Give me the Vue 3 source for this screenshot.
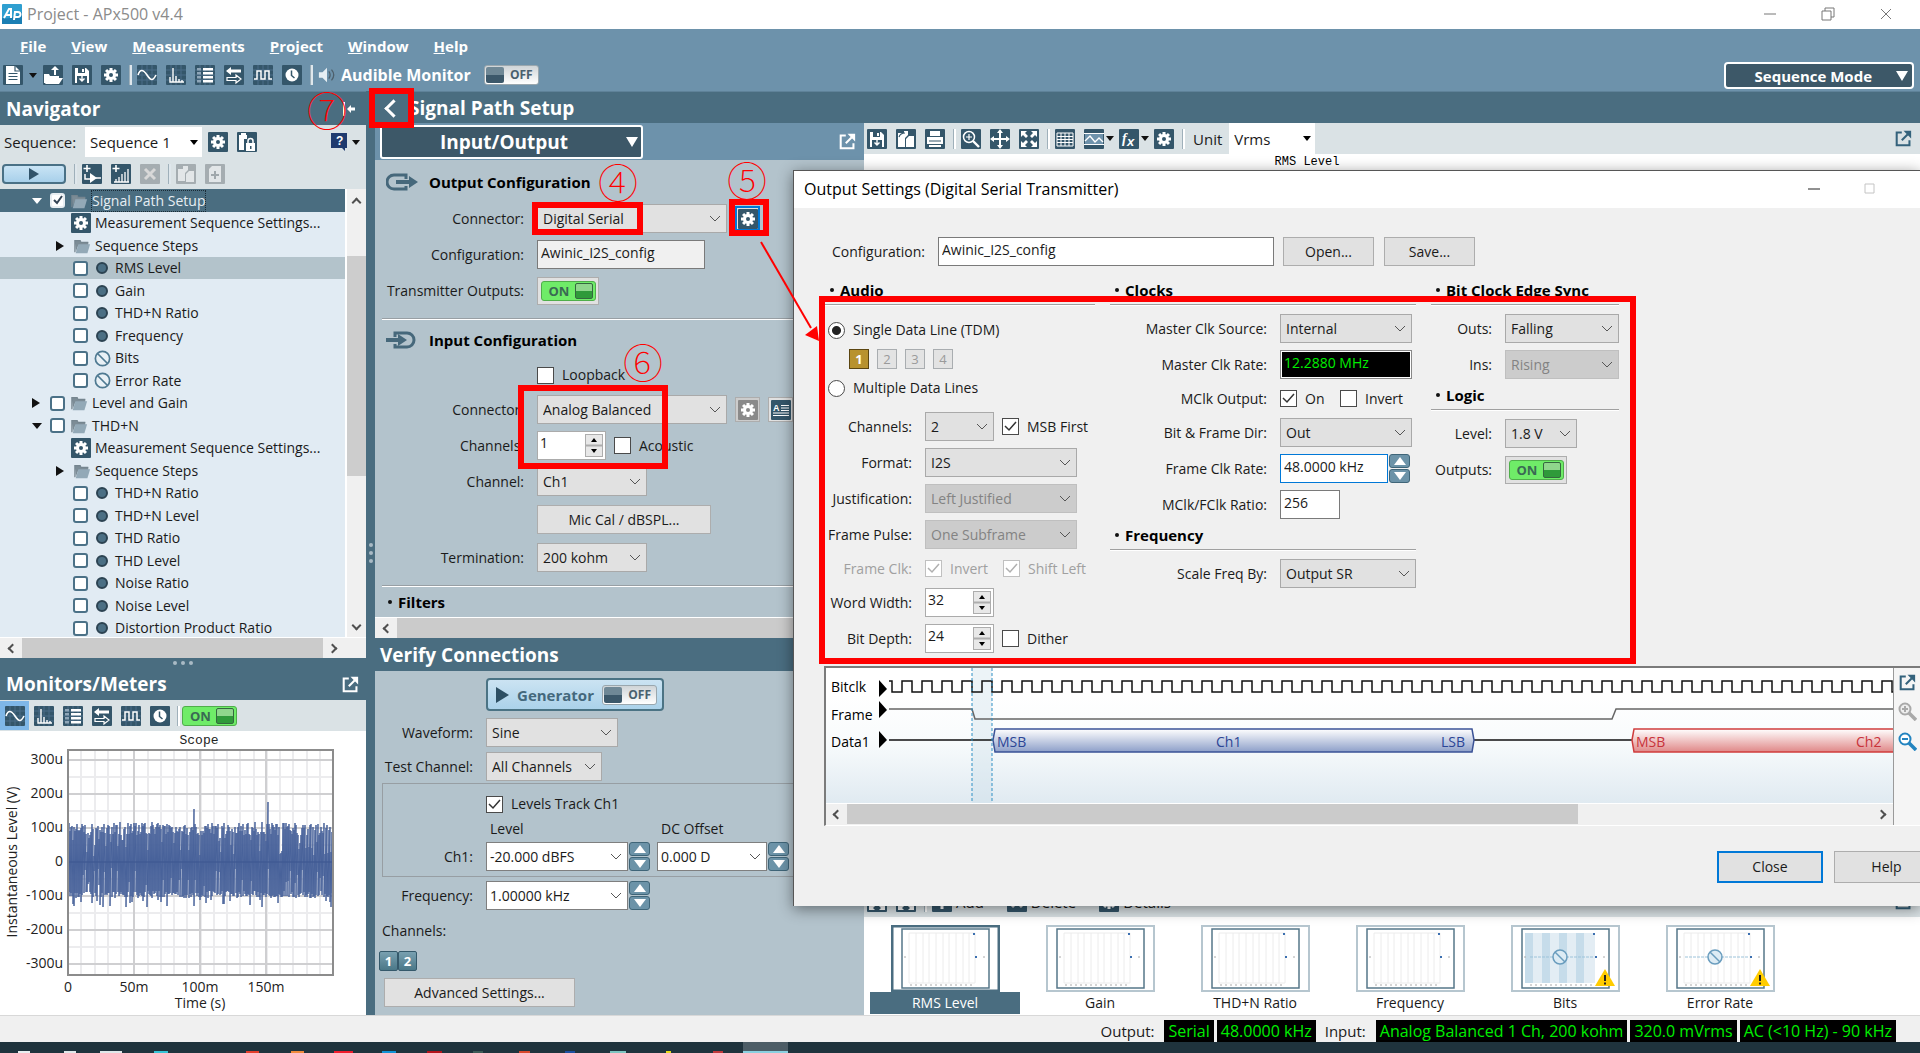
<script setup>
import { h } from 'vue'

const gear = '<g fill="#fff"><circle cx="10" cy="10" r="5"/><rect x="8.500" y="3" width="3" height="14"/><rect x="3" y="8.500" width="14" height="3"/><rect x="8.500" y="3" width="3" height="14" transform="rotate(45 10 10)"/><rect x="8.500" y="3" width="3" height="14" transform="rotate(-45 10 10)"/></g><circle cx="10" cy="10" r="2" fill="#34566a"/>'
const s = (d, w = 1.6, c = '#fff') => `<path d="${d}" fill="none" stroke="${c}" stroke-width="${w}"/>`
const f = (d, c = '#fff') => `<path d="${d}" fill="${c}"/>`
const mesh = s('M0 5H20M0 10H20M0 15H20M5 0V20M10 0V20M15 0V20', 1, '#4a6c88')

const icons = {
  gear,
  gearDim: gear.replace('#34566a', '#8a8a8a'),
  doc: f('M3 1h9l5 5v13H3z') + s('M12 1v5h5M5.500 8.500h9M5.500 11.500h9M5.500 14.500h9', 1.2, '#34566a'),
  open: f('M1 9h5l1 2h9v2H6l-3 5H1zM6 13h14l-4 6H2z') + s('M12 10V4', 2) + f('M8 5l4-4 4 4z'),
  save: f('M3 3h11l3 3v12H3z') + f('M6 3h7v5H6zM5 11h10v7H5z', '#34566a') + s('M10 10v6M7.500 13.500l2.500 2.500 2.500-2.500', 1.4) + f('M10 4h2v3h-2z'),
  sine: mesh + s('M1 10C3 4 6 4 10 10S16 16 19 10', 1.6),
  fft: mesh + s('M4 17V12V17H7V3V17H10V11V17H13V14V17H16V15V17H18', 1.4),
  list: mesh + f('M8 3h10v2.500H8zM8 7h10v2.500H8zM8 11h10v2.500H8zM8 15h10v2.500H8z') + f('M2 3h4v2.500H2zM2 7h4v2.500H2zM2 11h4v2.500H2zM2 15h4v2.500H2z', '#8fa6b8'),
  swap: f('M2 6l5-4v2.500h10v3H7V10z') + s('M3 12.500h9v-2.500l5 4-5 4v-2.500H3z', 1.2),
  digital: mesh + s('M1 14h3V6h4v8h4V6h4v8h3', 1.5),
  clock: '<circle cx="10" cy="10" r="6.500" fill="#fff"/>' + s('M9.500 5.500V10.500l3 2.500', 1.5, '#34566a'),
  lock: f('M2 3h8v4H7v11H2z') + f('M9 11h9v8H9z') + s('M11 11V9a2.500 2.500 0 0 1 5 0v2', 1.5) + f('M13 14h1.500v3H13z', '#34566a') + f('M4 1h5v2H4z'),
  addStep: s('M5 1v7M1.500 4.500h7', 1.6) + s('M3 10v5h5M14 14h5', 1.5) + f('M8 9l7 5-7 5z'),
  addChart: s('M5 1v7M1.500 4.500h7', 1.6) + s('M3 18h15M5 18v-3M8 18v-5M11 18v-8M14 18V8M17 18V5', 1.3),
  del: s('M5 5l10 10M15 5L5 15', 3, '#d8d8d8'),
  copyDim: f('M2 5h5V2h5v4L9 9v8H2z', '#e2e6e8') + f('M10 10l3-3h5v11h-8z', '#e2e6e8'),
  addDim: f('M4 5l3-3h9v16H4z', '#e2e6e8') + s('M10 7v8M6 11h8', 2, '#a0a8ac'),
  copy: f('M2 4h6V2h4v4l-3 3v9H2z') + f('M10 10l3-3h5v11h-8z') + s('M3 8c1-3 3-4 6-4', 1.2, '#34566a'),
  print: f('M5 2h10v5H5zM2 8h16v7H2z') + s('M4 12h12', 1.2, '#34566a') + f('M4 13h12v5H4z') + s('M2 15.500h16', 1, '#34566a'),
  zoomIn: '<circle cx="8" cy="8" r="5.500" fill="none" stroke="#fff" stroke-width="1.500"/>' + s('M8 5v6M5 8h6', 1.2) + s('M12 12l6 6', 2.4),
  move: s('M10 3v14M3 10h14', 2) + f('M10 0l3 4H7zM10 20l3-4H7zM0 10l4-3v6zM20 10l-4-3v6z'),
  expand: f('M2 2h6L6 4l3 3-2 2-3-3-2 2zM18 2v6l-2-2-3 3-2-2 3-3-2-2zM2 18v-6l2 2 3-3 2 2-3 3 2 2zM18 18h-6l2-2-3-3 2-2 3 3 2-2z'),
  table: s('M2 4h16v13H2zM2 7.500h16M2 10.500h16M2 13.500h16M6 4v13M10 4v13M14 4v13', 1),
  graph: f('M1 5h18v10H1z', '#6f93ac') + s('M0 4.500h20M0 15.500h20', 1) + s('M1 12l5-5 5 6 4-4 4 4', 1.4),
  fx: '<text x="3" y="14" font-family="Liberation Serif, serif" font-style="italic" font-weight="bold" font-size="14" fill="#fff">f</text><text x="8" y="17" font-family="Liberation Sans, sans-serif" font-style="italic" font-weight="bold" font-size="13" fill="#fff">x</text>',
  help: f('M2 1h16v15h-2v3l-3-3H2z', '#1f3a6e') + '<text x="7" y="13" font-family="Liberation Sans, sans-serif" font-weight="bold" font-size="12" fill="#fff">?</text>',
  abc: f('M1 3h18v14H1z', '#34566a') + '<text x="2" y="11" font-family="Liberation Sans, sans-serif" font-weight="bold" font-size="9" fill="#fff">A</text>' + s('M10 5.500h8M10 8h8M10 10.500h8M2 13h16M2 15.500h16', 1),
  ext: s('M8 3H2v15h15v-6', 2.4, 'currentColor') + s('M8 12L15 5', 2.4, 'currentColor') + f('M10 1h9v9z', 'currentColor'),
  plus: s('M10 3v14M3 10h14', 3),
  mag: '<circle cx="8" cy="8" r="5.500" fill="#fff" stroke="currentColor" stroke-width="2"/>' + s('M5 8h6', 2, 'currentColor') + s('M12 12l7 7', 3.5, 'currentColor'),
  magPlus: '<circle cx="8" cy="8" r="5.500" fill="#eee" stroke="currentColor" stroke-width="2"/>' + s('M5 8h6M8 5v6', 2, 'currentColor') + s('M12 12l7 7', 3.5, 'currentColor'),
  folder: f('M2 4h6l1 2h8v3H6L3 17z', '#7c8c96') + f('M6 8h13l-3 10H3z', '#93a9b7') + s('M2 17V4h6l1 2h8', 1.2, '#75858f'),
  ban: '<circle cx="10" cy="10" r="7.500" fill="#e9f1f6" stroke="currentColor" stroke-width="1.800"/>' + s('M5 5l10 10', 1.8, 'currentColor'),
  speaker: f('M1 7h4l5-5v16l-5-5H1z', '#e6eef3') + s('M12 6q3 4 0 8M15 4q5 6 0 12', 1.4, '#4d5f6b')
}

const Ic = (p) => h('svg', { viewBox: '0 0 20 20', 'aria-hidden': 'true', innerHTML: icons[p.name] })
Ic.props = ['name']
const Dd = (p) => h('select', null, [h('option', p.opt)])
Dd.props = ['opt']

const menus = ['File', 'View', 'Measurements', 'Project', 'Window', 'Help']
const meters = ['sine', 'fft', 'list', 'swap', 'digital', 'clock']

const leaf = (t, icon = 'dot') => ({ t, kind: 'leaf', icon })
const tree = [
  { t: 'Signal Path Setup', kind: 'branch', open: true, on: true, sel: true },
  { t: 'Measurement Sequence Settings...', kind: 'setup' },
  { t: 'Sequence Steps', kind: 'steps' },
  { ...leaf('RMS Level'), hot: true },
  leaf('Gain'), leaf('THD+N Ratio'), leaf('Frequency'), leaf('Bits', 'ban'), leaf('Error Rate', 'ban'),
  { t: 'Level and Gain', kind: 'branch', open: false },
  { t: 'THD+N', kind: 'branch', open: true },
  { t: 'Measurement Sequence Settings...', kind: 'setup' },
  { t: 'Sequence Steps', kind: 'steps' },
  leaf('THD+N Ratio'), leaf('THD+N Level'), leaf('THD Ratio'), leaf('THD Level'),
  leaf('Noise Ratio'), leaf('Noise Level'), leaf('Distortion Product Ratio')
]

/* scope trace: one vertical excursion per pixel column */
let seed = 7
const rnd = () => (seed = (seed * 16807) % 2147483647) / 2147483647
let trace = 'M68 131'
for (let x = 69; x < 333; x++) {
  const spike = x === 194 ? 20 : x === 268 ? 24 : 0
  const gap = rnd() > 0.86
  const up = gap && !spike ? 6 + rnd() * 20 : 27 + rnd() * 13 + spike
  const dn = rnd() > 0.86 ? 6 + rnd() * 18 : 29 + rnd() * 7 + (rnd() > 0.86 ? 9 : 0)
  trace += `L${x} ${Math.round(131 - up)}L${x} ${Math.round(131 + dn)}`
}
const yTicks = ['300u', '200u', '100u', '0', '-100u', '-200u', '-300u'].map((t, i) => ({ t, y: 29 + i * 34 }))
const xTicks = ['0', '50m', '100m', '150m'].map((t, i) => ({ t, x: 68 + i * 66 }))

let clk = 'M63 13H66'
for (let x = 66; x < 1080; x += 20) clk += `V24H${x + 10}V13H${x + 20}`

const thumbs = [
  { t: 'RMS Level', sel: true }, { t: 'Gain' }, { t: 'THD+N Ratio' }, { t: 'Frequency' },
  { t: 'Bits', bars: true, warn: true }, { t: 'Error Rate', warn: true }
]
const apps = [
  ['#e8eef0', 18, 12], ['#dfe7e9', 34, 12], ['#dfe7e9', 24, 22], ['#35c3d6', 32, 14], ['#e33e2b', 78, 13], ['#f08a3c', 32, 13], ['#f01c2c', 30, 19],
  ['#1292d6', 29, 14], ['#b3131b', 31, 15], ['#3d5b57', 31, 10], ['#d9472b', 36, 11], ['#1d4fa0', 35, 10], ['#7dc4c0', 35, 16], ['#e8dc1c', 40, 5], ['#c0393b', 42, 10]
]
</script>

<template>
  <div class="app">
    <header class="title">
      <svg class="logo" viewBox="0 0 20 20" aria-hidden="true"><rect width="20" height="20" rx="1" fill="#2f9fd0" /><path d="M0 14Q10 16 20 8V20H0z" fill="#1b7fb4" /><path d="M2 14L7 5h2v9M4 11h5M12 16l1-8h3a2 2 0 0 1 0 5h-3" fill="none" stroke="#fff" stroke-width="2" /></svg>
      <span>Project - APx500 v4.4</span>
      <svg class="winctl" viewBox="0 0 130 20" aria-hidden="true"><path d="M4 10H16M62 7h9v9h-9zM65 7V4h9v9h-3M121 5l10 10M131 5l-10 10" /></svg>
    </header>

    <div class="top">
      <div class="bars">
        <nav class="menu">
          <a v-for="m in menus" :key="m" href="#"><u>{{ m[0] }}</u>{{ m.slice(1) }}</a>
        </nav>
        <div class="tools">
          <Ic name="doc" class="ic" /><i class="tri mx" /><Ic name="open" class="ic" /><Ic name="save" class="ic" /><Ic name="gear" class="ic" />
          <i class="sep" />
          <Ic v-for="m in meters" :key="m" :name="m" class="ic" />
          <i class="sep" />
          <Ic name="speaker" class="spk" /><b class="aud">Audible Monitor</b>
          <button class="tog off"><i />OFF</button>
        </div>
      </div>
      <button class="mode">Sequence Mode<i class="tri w" /></button>
    </div>

    <main class="main">
      <section class="nav">
        <h2 class="hd navhd">Navigator<svg viewBox="0 0 14 14" class="pin" aria-hidden="true"><path d="M1 0v14" stroke="#fff" stroke-width="2" /><path d="M4 7l4-4v2.500h4v3H8V11z" fill="#fff" /></svg></h2>
        <div class="seq">
          <div class="seqrow">
            <label for="seq">Sequence:</label>
            <Dd id="seq" opt="Sequence 1" class="flat" />
            <Ic name="gear" class="ic" /><Ic name="lock" class="ic" />
            <span class="grow" /><Ic name="help" class="hlp" /><i class="tri" />
          </div>
          <div class="seqrow r2">
            <button class="play" aria-label="Run"><i /></button>
            <i class="sep" /><Ic name="addStep" class="ic" /><Ic name="addChart" class="ic" /><Ic name="del" class="ic dim" />
            <i class="sep" /><Ic name="copyDim" class="ic dim" /><Ic name="addDim" class="ic dim" />
          </div>
        </div>
        <div class="treebox">
          <div class="treeclip">
            <ul class="tree">
              <li v-for="(n, i) in tree" :key="i" :class="[n.kind, { sel: n.sel, hot: n.hot }]">
                <i v-if="n.kind === 'branch' || n.kind === 'steps'" class="exp" :class="{ open: n.open }" />
                <input v-if="n.kind === 'branch' || n.kind === 'leaf'" type="checkbox" class="tc" :checked="n.on" :aria-label="n.t">
                <Ic v-if="n.kind === 'branch' || n.kind === 'steps'" name="folder" class="fo" />
                <Ic v-if="n.kind === 'setup'" name="gear" class="ic" />
                <i v-if="n.icon === 'dot'" class="dot" />
                <Ic v-if="n.icon === 'ban'" name="ban" class="ban" />
                <span>{{ n.t }}</span>
              </li>
            </ul>
          </div>
          <div class="vbar"><i class="chev u" /><i class="vthumb" /><i class="chev d" /></div>
        </div>
        <div class="hbar"><i class="chev l" /><i class="hthumb nt" /><i class="chev r" /></div>
        <div class="grip"><i /><i /><i /></div>
        <h2 class="hd mon">Monitors/Meters<Ic name="ext" class="ext" /></h2>
        <div class="mtools">
          <span v-for="(m, i) in meters" :key="m" class="mt" :class="{ cur: i === 0 }"><Ic :name="m" class="ic" /></span>
          <i class="sep" /><button class="tog on">ON<i /></button>
        </div>
        <svg class="scope" viewBox="0 0 366 283" role="img" aria-label="Scope">
          <text x="199" y="13" class="mono">Scope</text>
          <g stroke="#ececee" stroke-width="2"><path v-for="k in 19" :key="k" :d="`M${68 + Math.round(k * 13.25)} 19V244`" /><path v-for="k in 6" :key="'h' + k" :d="`M69 ${12 + k * 34}H333`" /></g>
          <g stroke="#cfcfd1" stroke-width="2"><path v-for="t in yTicks" :key="t.t" :d="`M69 ${t.y}H333`" /><path v-for="t in xTicks" :key="t.t" :d="`M${t.x} 19V244`" /></g>
          <path :d="trace" fill="none" stroke="#48629a" stroke-width="1" />
          <path d="M68 131H333" stroke="#3d5690" />
          <rect x="68" y="19" width="265" height="225" fill="none" stroke="#8c8c8c" stroke-width="2" />
          <text v-for="t in yTicks" :key="t.t" x="63" :y="t.y + 4" class="end">{{ t.t }}</text>
          <text v-for="t in xTicks" :key="t.t" :x="t.x" y="261" class="mid">{{ t.t }}</text>
          <text x="200" y="277" class="mid">Time (s)</text>
          <text transform="translate(17 131) rotate(-90)" class="mid">Instantaneous Level (V)</text>
        </svg>
      </section>
      <div class="split"><i /><i /><i /></div>

      <section class="work">
        <h2 class="hd wh">Signal Path Setup</h2>
        <div class="cols">
          <div class="path">
            <div class="iobar"><button class="iobtn"><span>Input/Output</span><i class="tri w" /></button><Ic name="ext" class="ext" /></div>
            <div class="io">
              <h3><svg viewBox="0 0 32 18" class="ioi" aria-hidden="true"><path d="M20 6V2H8a6 6 0 0 0 0 14h12v-3" /><path class="fl" d="M10 7h13V3l9 6-9 6v-4H10z" /></svg>Output Configuration</h3>
              <div class="row"><label for="oc">Connector:</label><Dd id="oc" opt="Digital Serial" class="dd w190" /><button class="ib focus" aria-label="Output settings"><Ic name="gear" class="ic" /></button></div>
              <div class="row"><label for="ocf">Configuration:</label><input id="ocf" class="tb w168 ro" value="Awinic_I2S_config"></div>
              <div class="row"><label for="to">Transmitter Outputs:</label><button id="to" class="wrap"><span class="tog on">ON<i /></span></button></div>
              <hr>
              <h3><svg viewBox="0 0 32 18" class="ioi" aria-hidden="true"><path d="M9 6V2h12a7 7 0 0 1 0 14H9v-3" /><path class="fl" d="M0 7h12V3l9 6-9 6v-4H0z" /></svg>Input Configuration</h3>
              <div class="row chk"><label /><label class="cb"><input type="checkbox">Loopback</label></div>
              <div class="row"><label for="ic">Connector:</label><Dd id="ic" opt="Analog Balanced" class="dd w190" /><button class="ib dis" aria-label="Input settings"><Ic name="gearDim" class="ic" /></button><button class="ib" aria-label="Labels"><Ic name="abc" class="ic" /></button></div>
              <div class="row"><label for="ich">Channels:</label><span class="spin"><input id="ich" value="1"><i /></span><label class="cb"><input type="checkbox">Acoustic</label></div>
              <div class="row"><label for="ch">Channel:</label><Dd id="ch" opt="Ch1" class="dd w110" /></div>
              <div class="row roomy"><label /><button class="btn w174">Mic Cal / dBSPL...</button></div>
              <div class="row roomy"><label for="term">Termination:</label><Dd id="term" opt="200 kohm" class="dd w110" /></div>
              <hr>
              <h3 class="bul">Filters</h3>
            </div>
            <div class="hbar"><i class="chev l" /><i class="hthumb" /></div>
            <h2 class="hd vc">Verify Connections</h2>
            <div class="vf">
              <button class="gen"><i class="pl" />Generator<span class="tog off"><i />OFF</span></button>
              <div class="row"><label for="wf">Waveform:</label><Dd id="wf" opt="Sine" class="dd w132" /></div>
              <div class="row"><label for="tc">Test Channel:</label><Dd id="tc" opt="All Channels" class="dd w116" /></div>
              <div class="grp">
                <div class="row"><label /><label class="cb"><input type="checkbox" checked>Levels Track Ch1</label></div>
                <div class="row lh"><label /><span class="lv">Level</span><span>DC Offset</span></div>
                <div class="row"><label for="lv">Ch1:</label><Dd id="lv" opt="-20.000 dBFS" class="dd edit w142" /><span class="ud"><i /><i /></span><Dd opt="0.000 D" class="dd edit w110 dc" aria-label="DC Offset" /><span class="ud"><i /><i /></span></div>
              </div>
              <div class="row"><label for="fq">Frequency:</label><Dd id="fq" opt="1.00000 kHz" class="dd edit w142" /><span class="ud"><i /><i /></span></div>
              <p class="chs">Channels:</p>
              <div class="chb"><button>1</button><button>2</button></div>
              <button class="btn adv">Advanced Settings...</button>
            </div>
          </div>

          <div class="graph">
            <div class="gt">
              <Ic name="save" class="ic" /><Ic name="copy" class="ic" /><Ic name="print" class="ic" /><i class="sep" />
              <Ic name="zoomIn" class="ic" /><Ic name="move" class="ic" /><Ic name="expand" class="ic" /><i class="sep" />
              <Ic name="table" class="ic" /><span class="ia"><Ic name="graph" class="ic" /><i class="tri" /></span><span class="ia"><Ic name="fx" class="ic" /><i class="tri" /></span><Ic name="gear" class="ic" /><i class="sep" />
              <label for="unit">Unit</label><Dd id="unit" opt="Vrms" class="flat unit" />
              <span class="grow" /><Ic name="ext" class="ext dk" />
            </div>
            <div class="plot">RMS Level</div>
            <div class="gt low">
              <Ic name="expand" class="ic" /><Ic name="expand" class="ic" /><i class="sep" /><Ic name="plus" class="ic" /><span class="lt">Add</span><Ic name="del" class="ic" /><span class="lt">Delete</span><Ic name="gear" class="ic" /><span class="lt">Details</span>
              <span class="grow" /><Ic name="ext" class="ext dk" />
            </div>
            <div class="thumbs">
              <button v-for="t in thumbs" :key="t.t" class="th" :class="{ sel: t.sel }">
                <svg viewBox="0 0 109 67" aria-hidden="true">
                  <rect class="fr" x="1" y="1" width="107" height="65" />
                  <rect x="11" y="4" width="87" height="59" fill="#fff" stroke="#567789" stroke-width="1.500" />
                  <g v-if="t.bars"><path d="M14 8h70v50H14z" fill="#e3edf4" /><path d="M14 8h8v50h-8zM31 8h8v50h-8zM48 8h8v50h-8zM65 8h8v50h-8z" fill="#c6dcea" /></g>
                  <path v-else d="M18 8h66v50H18zM25 8v50M32 8v50M38 8v50M45 8v50M52 8v50M58 8v50M65 8v50M72 8v50M78 8v50" fill="none" stroke="#ececec" />
                  <path d="M13 32h4M92 32h5M19 60h62" stroke="#aaa" stroke-dasharray="2 3" /><path d="M84 31h2v2h-2zM82 8h2v2h-2z" fill="#3b6fb0" />
                  <g v-if="t.warn"><path d="M19 32H82" stroke="#9cc3da" stroke-dasharray="3 1" /><circle cx="49" cy="32" r="7" fill="#dcebf4" stroke="#6a9dbe" stroke-width="1.500" /><path d="M44 27l10 10" stroke="#6a9dbe" stroke-width="1.500" /><path d="M94 44l10 17H84z" fill="#ffcc00" /><path d="M94 50v6M94 57.500v2" stroke="#222" stroke-width="2" /></g>
                </svg>
                <span>{{ t.t }}</span>
              </button>
            </div>
          </div>
        </div>
      </section>
    </main>

    <footer class="status">
      <span>Output:</span><output>Serial</output><output>48.0000 kHz</output><span class="in">Input:</span><output>Analog Balanced 1 Ch, 200 kohm</output><output>320.0 mVrms</output><output>AC (&lt;10 Hz) - 90 kHz</output>
    </footer>
    <div class="task"><i v-for="(a, i) in apps" :key="i" :style="{ background: a[0], marginLeft: a[1] + 'px', width: a[2] + 'px' }" /><i class="act" /></div>

    <section class="dlg" role="dialog" aria-label="Output Settings">
      <header class="dt"><span>Output Settings (Digital Serial Transmitter)</span><svg viewBox="0 0 80 20" aria-hidden="true"><path d="M5 10H17" stroke="#222" /><path d="M62 5h9v9h-9z" fill="none" stroke="#c4c4c4" /></svg></header>
      <div class="db">
        <div class="row cfg"><label for="cfg">Configuration:</label><input id="cfg" class="tb" value="Awinic_I2S_config"><button class="btn">Open...</button><button class="btn">Save...</button></div>
        <div class="tri3">
          <div class="col c1">
            <h4>Audio</h4>
            <div class="rad">
              <label class="cb"><input type="radio" name="dl" checked>Single Data Line (TDM)</label>
              <div class="nums"><button class="on">1</button><button>2</button><button>3</button><button>4</button></div>
              <label class="cb"><input type="radio" name="dl">Multiple Data Lines</label>
            </div>
            <div class="row"><label for="dch">Channels:</label><Dd id="dch" opt="2" class="dd w69" /><label class="cb"><input type="checkbox" checked>MSB First</label></div>
            <div class="row"><label for="dfm">Format:</label><Dd id="dfm" opt="I2S" class="dd w152" /></div>
            <div class="row"><label for="dju">Justification:</label><Dd id="dju" opt="Left Justified" disabled class="dd w152" /></div>
            <div class="row"><label for="dfp">Frame Pulse:</label><Dd id="dfp" opt="One Subframe" disabled class="dd w152" /></div>
            <div class="row chk gray"><label>Frame Clk:</label><label class="cb f78"><input type="checkbox" checked disabled>Invert</label><label class="cb"><input type="checkbox" checked disabled>Shift Left</label></div>
            <div class="row"><label for="dww">Word Width:</label><span class="spin"><input id="dww" value="32"><i /></span></div>
            <div class="row"><label for="dbd">Bit Depth:</label><span class="spin"><input id="dbd" value="24"><i /></span><label class="cb"><input type="checkbox">Dither</label></div>
          </div>
          <div class="col c2">
            <h4>Clocks</h4>
            <div class="row"><label for="ms">Master Clk Source:</label><Dd id="ms" opt="Internal" class="dd w132" /></div>
            <div class="row"><label for="mr">Master Clk Rate:</label><input id="mr" class="tb lcd w132" value="12.2880 MHz" readonly></div>
            <div class="row chk"><label>MClk Output:</label><label class="cb f60"><input type="checkbox" checked>On</label><label class="cb"><input type="checkbox">Invert</label></div>
            <div class="row"><label for="bf">Bit &amp; Frame Dir:</label><Dd id="bf" opt="Out" class="dd w132" /></div>
            <div class="row"><label for="fr">Frame Clk Rate:</label><input id="fr" class="tb w108 foc" value="48.0000 kHz"><span class="ud"><i /><i /></span></div>
            <div class="row"><label for="ra">MClk/FClk Ratio:</label><input id="ra" class="tb w60" value="256"></div>
            <h4 class="h2nd">Frequency</h4>
            <div class="row"><label for="sf">Scale Freq By:</label><Dd id="sf" opt="Output SR" class="dd w136" /></div>
          </div>
          <div class="col c3">
            <h4>Bit Clock Edge Sync</h4>
            <div class="row"><label for="ou">Outs:</label><Dd id="ou" opt="Falling" class="dd w114" /></div>
            <div class="row"><label for="in">Ins:</label><Dd id="in" opt="Rising" disabled class="dd w114" /></div>
            <h4 class="h2nd">Logic</h4>
            <div class="row"><label for="le">Level:</label><Dd id="le" opt="1.8 V" class="dd w72" /></div>
            <div class="row"><label for="op">Outputs:</label><button id="op" class="wrap"><span class="tog on">ON<i /></span></button></div>
          </div>
        </div>
        <div class="timing">
          <div class="tl">
            <div class="waves">
              <svg width="1400" height="135" viewBox="0 0 1400 135" role="img" aria-label="Timing diagram">
                <defs>
                  <linearGradient id="b" x2="0" y2="1"><stop offset="0" stop-color="#fff" /><stop offset="1" stop-color="#8d9fc9" /></linearGradient>
                  <linearGradient id="r" x2="0" y2="1"><stop offset="0" stop-color="#fff" /><stop offset="1" stop-color="#e08888" /></linearGradient>
                </defs>
                <rect x="146" width="20" height="135" fill="#c8dde8" opacity=".35" />
                <path :d="clk" class="wv" />
                <path d="M63 41H146L149 51H786L790 41H1400" class="wv fr2" />
                <path d="M63 72H167M648 72H806" class="wv" />
                <path d="M53 12v17l8-8zM53 33v17l8-8zM53 63v17l8-8z" />
                <path d="M167 72L169 61H646L648 72L646 84H169Z" fill="url(#b)" stroke="#3a5296" stroke-width="1.500" />
                <path d="M806 72L808 61H1390V84H808Z" fill="url(#r)" stroke="#cf3c3c" stroke-width="1.500" />
                <path d="M146 0V135M166 0V135" stroke="#2f8fc4" stroke-dasharray="3 2" />
                <text x="5" y="24">Bitclk</text><text x="5" y="52">Frame</text><text x="5" y="79">Data1</text>
                <g fill="#2b4596"><text x="171" y="79">MSB</text><text x="390" y="79">Ch1</text><text x="615" y="79">LSB</text></g>
                <g fill="#c8323a"><text x="810" y="79">MSB</text><text x="1030" y="79">Ch2</text></g>
              </svg>
            </div>
            <div class="hbar"><i class="chev l" /><i class="hthumb wt" /><i class="chev r" /></div>
          </div>
          <div class="side"><Ic name="ext" class="ext dk" /><Ic name="magPlus" class="mg g" /><Ic name="mag" class="mg" /></div>
        </div>
        <div class="ft"><button class="btn pri">Close</button><button class="btn">Help</button></div>
      </div>
    </section>

    <div class="marks" aria-hidden="true">
      <i class="box b7" /><i class="box b4" /><i class="box b5" /><i class="box b6" /><i class="box bd" />
      <b class="num n4">④</b><b class="num n5">⑤</b><b class="num n6">⑥</b><b class="num n7">⑦</b>
      <svg class="arrow" viewBox="0 0 64 102"><path d="M4 2L54 88" stroke="#f00" stroke-width="2" /><path d="M62 101L48 95L60 86Z" fill="#f00" /></svg>
    </div>
  </div>
</template>

<style>
html, body { margin: 0; }
</style>

<style scoped>
* { box-sizing: border-box; }
.app { position: relative; display: flex; flex-direction: column; min-height: 100vh; overflow: hidden; background: #f0f0f0; color: #1a1a1a; font: 14px/20px "Open Sans", "Noto Sans", sans-serif; }
i { font-style: normal; flex: none; }
svg { flex: none; display: block; }
button, input, select { font: inherit; color: inherit; margin: 0; }
button { padding: 0; }
h2, h3, h4, p, ul { margin: 0; padding: 0; }
.grow { flex: 1; }

.title { height: 29px; background: #fff; display: flex; align-items: center; padding: 0 30px 2px 2px; color: #8b8b8b; font-size: 16px; gap: 5px; }
.logo { width: 20px; height: 20px; }
.winctl { width: 130px; height: 20px; margin-left: auto; fill: none; stroke: #777; overflow: visible; }

.top { display: flex; justify-content: space-between; height: 62px; background: #6d92ab; color: #fff; }
.bars { display: flex; flex-direction: column; }
.menu { display: flex; gap: 25px; padding-left: 20px; height: 33px; align-items: center; }
.menu a { color: #fff; font-weight: 700; text-decoration: none; font-size: 15px; }
.tools { display: flex; align-items: center; height: 26px; padding-left: 3px; gap: 9px; }
.ic { width: 20px; height: 20px; background: #34566a; border-radius: 1px; }
.ic.dim { background: #a5adb1; }
.tri { width: 0; height: 0; border: 4px solid transparent; border-top: 5px solid #111; border-bottom: 0; }
.tri.mx { margin: 0 -3px; }
.tri.w { border-width: 10px 6px 0; border-top-color: #fff; }
.sep { width: 2px; height: 20px; background: #dfe7ec; box-shadow: -1px 0 #9fb0ba; margin: 0 -4px 0 0; }
.spk { width: 18px; height: 18px; }
.aud { font-size: 16px; margin-left: -4px; white-space: nowrap; }
.tog { display: inline-flex; align-items: center; justify-content: space-between; width: 55px; height: 20px; border: 1px solid #9aa7ae; border-radius: 3px; font-weight: 700; font-size: 12px; line-height: 16px; }
.tog.off { background: linear-gradient(#cfd4d7, #fff); color: #49606e; padding: 0 5px 0 1px; margin-left: 4px; }
.tog i { width: 18px; height: 16px; border-radius: 2px; background: linear-gradient(#6f8896 50%, #3c586a 50%); }
.tog.on { background: #6fec68; border-color: #4fae4a; color: #3a6a54; padding: 0 2px 0 7px; font-size: 13px; }
.tog.on i { background: linear-gradient(#8fd68c 50%, #2f9a3a 50%); border: 1px solid #35683f; }
.mode { align-self: flex-end; width: 190px; height: 27px; margin: 0 6px 2px 0; background: #3d5868; border: 2px solid #fff; border-radius: 4px; color: #fff; font-weight: 700; font-size: 15px; display: flex; align-items: center; justify-content: flex-end; gap: 24px; padding-right: 4px; white-space: nowrap; }

.main { flex: 1; display: flex; min-height: 0; }
.hd { background: #4a6d80; color: #fff; font-size: 19px; line-height: 24px; font-weight: 700; display: flex; align-items: center; white-space: nowrap; }
.nav { width: 366px; flex: none; display: flex; flex-direction: column; background: #fff; }
.navhd { height: 34px; padding: 0 9px 0 6px; justify-content: space-between; border-top: 1px solid #5f8299; }
.pin { width: 14px; height: 14px; }
.seq { background: #dae2e5; height: 64px; font-size: 15px; }
.seqrow { display: flex; align-items: center; height: 34px; gap: 9px; padding: 0 6px 0 4px; }
.seqrow label { margin-right: -2px; width: 74px; white-space: nowrap; }
.seqrow.r2 { height: 30px; }
.flat { appearance: none; border: 0; border-radius: 0; height: 30px; width: 117px; padding: 0 0 0 5px; background: #fff url("data:image/svg+xml,%3Csvg xmlns='http://www.w3.org/2000/svg' width='8' height='5'%3E%3Cpath d='M0 0h8l-4 5z'/%3E%3C/svg%3E") no-repeat right 4px center; margin-right: -3px; }
.hlp { width: 20px; height: 22px; }
.hlp + .tri { margin-left: -6px; }
.play { width: 64px; height: 20px; border: 2px solid #4a7186; border-radius: 4px; background: linear-gradient(#c9e4f5, #a8d0ea); display: flex; justify-content: center; align-items: center; margin-left: -2px; }
.play i { border: 6px solid transparent; border-left: 10px solid #30536a; border-right: 0; }

.treebox { display: flex; height: 448px; background: #e1ebf3; flex: none; }
.treeclip { flex: 1; overflow: hidden; height: 100%; }
.tree { list-style: none; display: flex; flex-direction: column; height: 450px; }
.tree li { flex: 1; min-height: 0; display: flex; align-items: center; white-space: nowrap; padding-top: 1px; }
.tree span { line-height: 20px; }
.tree .sel { background: #4a6d80; color: #e6eef3; }
.tree .sel span { outline: 1px dotted #1a2b36; }
.tree .hot { background: #b3c3cb; }
.tree .branch { padding-left: 32px; }
.tree .setup { padding-left: 71px; gap: 4px; }
.tree .steps { padding-left: 56px; }
.tree .leaf { padding-left: 73px; }
.exp { width: 12px; height: 12px; display: flex; align-items: center; }
.exp::before { content: ""; border: 5px solid transparent; border-left: 8px solid #111; border-right: 0; }
.exp.open::before { border: 5px solid transparent; border-top: 6px solid #111; border-bottom: 0; }
.sel .exp.open::before { border-top-color: #fff; }
.branch .tc { margin-left: 6px; }
.tc { appearance: none; width: 15px; height: 15px; border: 2px solid #4b7187; border-radius: 3px; background: #fff; flex: none; }
.tc:checked { border-color: #e8eef2; background: #fff url("data:image/svg+xml,%3Csvg xmlns='http://www.w3.org/2000/svg' width='11' height='11'%3E%3Cpath d='M2 5l3 3 5-7' fill='none' stroke='%23345' stroke-width='2'/%3E%3C/svg%3E") center no-repeat; }
.fo { width: 20px; height: 18px; margin: 0 3px 0 4px; }
.dot { width: 12px; height: 12px; border-radius: 50%; background: #4b6f84; border: 2px solid #2c4352; margin: 0 7px 0 8px; }
.ban { width: 19px; height: 19px; margin: 0 3px 0 5px; color: #4f7a92; }
.vbar { width: 21px; background: #f0f0f0; border-left: 2px solid #fff; display: flex; flex-direction: column; align-items: center; padding: 8px 0; }
.vthumb { width: 100%; height: 220px; background: #cdcdcd; margin: 50px 0 auto; }
.chev { width: 7px; height: 7px; border: solid #505050; border-width: 2px 2px 0 0; }
.chev.u { transform: rotate(-45deg); margin-top: 2px; }
.chev.d { transform: rotate(135deg); }
.chev.l { transform: rotate(-135deg); margin: 0 6px 0 9px; }
.chev.r { transform: rotate(45deg); margin: 0 8px 0 auto; }
.hbar { display: flex; align-items: center; height: 21px; background: #f0f0f0; border-top: 1px solid #fff; flex: none; overflow: hidden; }
.hthumb { flex: 1; height: 100%; background: #cbcbcb; }
.hthumb.nt { flex: 0 0 301px; }
.nav .hbar .r { margin-right: 30px; }
.grip { height: 10px; background: #4a6d80; display: flex; justify-content: center; align-items: center; gap: 4px; }
.grip i, .split i { width: 4px; height: 4px; border-radius: 50%; background: #a9bac5; }
.mon { height: 32px; padding: 0 7px 0 6px; justify-content: space-between; }
.ext { width: 17px; height: 17px; color: #fff; }
.ext.dk { color: #34627c; }
.mtools { display: flex; align-items: center; height: 31px; background: #dae2e5; }
.mt { width: 29px; height: 29px; display: flex; align-items: center; justify-content: center; }
.mt.cur { background: #7fb7e8; }
.mtools .sep { margin: 0 2px 0 4px; background: #fff; }
.scope { width: 366px; height: 283px; background: #fff; }
.scope text { font-size: 14px; fill: #222; }
.scope .mono { font: 13px "Liberation Mono", monospace; text-anchor: middle; }
.scope .end { text-anchor: end; }
.scope .mid { text-anchor: middle; }
.split { width: 9px; flex: none; background: #4a6d80; display: flex; flex-direction: column; align-items: center; justify-content: center; gap: 4px; }

.work { flex: 1; min-width: 0; display: flex; flex-direction: column; }
.wh { height: 32px; padding-left: 34px; border-top: 1px solid #5f8299; }
.cols { flex: 1; display: flex; min-width: 0; }
.path { width: 489px; flex: none; display: flex; flex-direction: column; background: #b3c3cc; }
.iobar { height: 37px; background: #6d92ab; display: flex; align-items: center; justify-content: space-between; padding: 0 8px 0 5px; }
.iobtn { width: 263px; height: 34px; background: #3d5868; border: 2px solid #fff; border-radius: 3px; color: #fff; font-size: 19px; font-weight: 700; display: flex; align-items: center; padding-right: 3px; }
.iobtn span { flex: 1; }
.io { display: flex; flex-direction: column; gap: 7px; padding-top: 11px; height: 457px; }
h3 { font-size: 15px; font-weight: 700; line-height: 22px; height: 22px; display: flex; align-items: center; color: #000; padding-left: 11px; gap: 11px; margin-bottom: 4px; white-space: nowrap; }
.ioi { width: 32px; height: 18px; fill: none; stroke: #46687b; stroke-width: 3; }
.ioi .fl { fill: #46687b; stroke: none; }
hr { width: auto; border: 0; height: 2px; background: #989fa4; border-bottom: 1px solid #fff; margin: 6px 0 2px 7px; flex: none; }
.bul { margin: -5px 0 0; gap: 6px; padding-left: 13px; }
.bul::before, h4::before { content: ""; width: 4px; height: 4px; border-radius: 50%; background: #111; }
.row { display: flex; align-items: center; height: 29px; flex: none; white-space: nowrap; }
.row > label:first-child { width: 149px; margin-right: 13px; text-align: right; flex: none; }
.row.chk { height: 26px; }
.row.roomy { margin-top: 2px; }
.cb { display: inline-flex; align-items: center; gap: 8px; }
.cb input { appearance: none; width: 17px; height: 17px; background: #fff; border: 1px solid #4a4a4a; flex: none; }
.cb input:checked { background: #fff url("data:image/svg+xml,%3Csvg xmlns='http://www.w3.org/2000/svg' width='15' height='15'%3E%3Cpath d='M2 7l4 4 7-8' fill='none' stroke='%23333' stroke-width='1.500'/%3E%3C/svg%3E") center no-repeat; }
.cb input[type="radio"] { border-radius: 50%; }
.cb input[type="radio"]:checked { background: radial-gradient(circle, #222 4px, #fff 5px); }
.cb input:disabled { border-color: #c0c0c0; }
.cb input:disabled:checked { background-image: url("data:image/svg+xml,%3Csvg xmlns='http://www.w3.org/2000/svg' width='15' height='15'%3E%3Cpath d='M2 7l4 4 7-8' fill='none' stroke='%23b0b0b0' stroke-width='1.500'/%3E%3C/svg%3E"); }
.dd { appearance: none; height: 29px; border: 1px solid #a9a9a9; border-radius: 0; padding: 0 0 0 5px; background: #e1e1e1 url("data:image/svg+xml,%3Csvg xmlns='http://www.w3.org/2000/svg' width='12' height='7'%3E%3Cpath d='M1 1l5 5 5-5' fill='none' stroke='%23555'/%3E%3C/svg%3E") no-repeat right 5px center; opacity: 1; }
.dd:disabled { background-color: #cccccc; color: #838383; border-color: #bfbfbf; }
.dd.edit { background-color: #fff; border-color: #7f7f7f; padding-left: 3px; }
.tb { height: 29px; border: 1px solid #7a7a7a; background: #fff; padding: 0 3px 4px; min-width: 0; }
.tb.ro { background: #f0f0f0; }
.tb.lcd { background: #000; color: #0e0; border: 1px solid #888; box-shadow: inset 0 0 0 1px #fff; }
.tb.foc { border-color: #0078d7; }
.w190 { width: 190px; } .w168 { width: 168px; } .w110 { width: 110px; } .w132 { width: 132px; } .w116 { width: 116px; } .w142 { width: 142px; }
.w174 { width: 174px; } .w69 { width: 69px; } .w152 { width: 152px; } .w108 { width: 108px; } .w60 { width: 60px; } .w136 { width: 136px; } .w114 { width: 114px; } .w72 { width: 72px; }
.ib { width: 25px; height: 25px; border: 1px solid #adadad; background: #e1e1e1; display: grid; place-items: center; margin-left: 8px; }
.ib.focus { border: 2px solid #0078d7; }
.ib.dis { background: #ccc; }
.ib.dis .ic { background: #8a8a8a; }
.wrap { width: 62px; height: 28px; border: 1px solid #adadad; background: #e1e1e1; display: grid; place-items: center; }
.spin { display: flex; width: 69px; height: 29px; border: 1px solid #ababab; background: #fff; padding: 2px; flex: none; }
.spin input { width: 45px; border: 0; padding: 0 0 5px; background: none; }
.spin i { width: 18px; height: 23px; border: 1px solid #adadad; background: #e8e8e8 url("data:image/svg+xml,%3Csvg xmlns='http://www.w3.org/2000/svg' width='16' height='21'%3E%3Cpath d='M5 7h6l-3-4zM5 14h6l-3 4z'/%3E%3Cpath d='M0 10.500h16' stroke='%23adadad' stroke-width='2'/%3E%3C/svg%3E") center no-repeat; }
.spin + .cb, .dd + .cb { margin-left: 8px; }
.btn { height: 29px; border: 1px solid #adadad; background: #e1e1e1; white-space: nowrap; }
.vc { height: 33px; padding-left: 5px; flex: none; }
.vf { display: flex; flex-direction: column; padding: 7px 0 0; flex: 1; }
.vf .row > label:first-child { width: 98px; }
.gen { width: 178px; height: 33px; margin: 0 0 7px 111px; border: 2px solid #4b7384; border-radius: 4px; background: linear-gradient(#cbe3f2, #abd2ea); color: #44687c; font-weight: 700; font-size: 15px; display: flex; align-items: center; padding: 0 5px 0 8px; justify-content: space-between; }
.gen .pl { border: 8px solid transparent; border-left: 13px solid #2d4f63; border-right: 0; }
.gen .tog { margin-left: 0; }
.vf > .row + .row { margin-top: 5px; }
.grp { margin: 2px 0 4px 7px; border: 1px solid #979ea3; height: 94px; padding-top: 9px; }
.grp .row > label:first-child { width: 90px; }
.grp .row:first-child { height: 22px; }
.lh.row { height: 20px; margin: 4px 0 3px; }
.lh .lv { width: 171px; padding-left: 4px; }
.lh span:last-child { padding-left: 4px; }
.ud { display: flex; flex-direction: column; gap: 1px; margin-left: 1px; flex: none; }
.ud i { width: 21px; height: 14px; border-radius: 3px; border: 1px solid #3f6578; background: #6c93a8; display: grid; place-items: center; }
.ud i::before { content: ""; border: 6px solid transparent; border-bottom: 8px solid #fff; border-top: 0; }
.ud i + i::before { border: 6px solid transparent; border-top: 8px solid #fff; border-bottom: 0; }
.dc { margin-left: 7px; }
.chs { padding: 11px 0 9px 7px; }
.chb { display: flex; padding: 1px 0 7px 4px; }
.chb button { width: 19px; height: 20px; border: 1px solid #35596b; border-radius: 2px; background: linear-gradient(#79a0b0, #4b7888); color: #fff; font-weight: 700; font-size: 13px; line-height: 18px; }
.adv { width: 191px; margin-left: 9px; }

.graph { flex: 1; min-width: 0; display: flex; flex-direction: column; background: #fff; }
.gt { display: flex; align-items: center; gap: 9px; height: 31px; background: #dae2e5; padding: 0 8px 0 3px; flex: none; font-size: 15px; }
.gt .sep { background: #fff; }
.ia { display: flex; align-items: center; gap: 2px; margin-right: -4px; }
.gt label { margin-left: 3px; }
.flat.unit { width: 86px; height: 31px; margin-left: -2px; }
.plot { flex: 1; text-align: center; font: 12px/16px "Liberation Mono", monospace; color: #000; padding-right: 170px; }
.lt { margin: 0 14px 0 -5px; }
.thumbs { display: flex; gap: 5px; height: 98px; padding: 8px 0 0 6px; flex: none; }
.th { width: 150px; flex: none; border: 0; background: none; display: flex; flex-direction: column; align-items: center; height: 90px; }
.th svg { width: 109px; height: 67px; }
.th .fr { fill: #fff; stroke: #b6c6cf; stroke-width: 2; }
.th.sel .fr { stroke: #4a6d80; stroke-width: 3; }
.th span { width: 100%; line-height: 22px; }
.th.sel span { background: #4a6d80; color: #fff; }

.status { height: 27px; display: flex; align-items: center; justify-content: flex-end; gap: 3px; padding: 3px 24px 0 0; background: #f0f0f0; border-top: 1px solid #d8d8d8; white-space: nowrap; flex: none; font-size: 15px; }
.status span { margin-right: 7px; }
.status .in { margin-left: 6px; }
output { background: #000; color: #0e0; font-size: 16px; line-height: 22px; padding: 0 4px; }
.task { height: 11px; background: #1f333d; display: flex; align-items: flex-end; overflow: hidden; flex: none; }
.task i { height: 2px; }
.task .act { height: 11px; width: 45px; margin-left: 20px; background: #4d5d66; border-bottom: 2px solid #8ad0e0; }

.dlg { position: absolute; left: 793px; right: 0; top: 170px; height: 736px; background: #f0f0f0; border: solid #565656; border-width: 1px 0 0 1px; box-shadow: 0 3px 14px rgba(0, 0, 0, .45); overflow: hidden; }
.dt { height: 37px; background: #fff; color: #000; display: flex; align-items: center; justify-content: space-between; padding: 0 37px 2px 10px; font-size: 16px; }
.dt svg { width: 80px; height: 20px; }
.db { padding: 29px 0 0 31px; }
.cfg.row > label:first-child { width: 100px; }
.cfg .tb { width: 336px; margin-right: 9px; }
.cfg .btn { width: 91px; margin-right: 10px; }
.tri3 { display: grid; grid-template-columns: 270px 306px 188px; gap: 15px; margin-top: 12px; align-items: start; }
.col { display: flex; flex-direction: column; gap: 7px; }
h4 { display: flex; align-items: center; gap: 6px; height: 27px; font-size: 15px; font-weight: 700; color: #000; padding: 0 0 2px 5px; border-bottom: 1px solid #a0a0a0; box-shadow: 0 1px #fff; margin-bottom: 2px; white-space: nowrap; }
.h2nd { margin-top: -3px; }
.col .row.chk { height: 25px; }
.c1 .row > label:first-child { width: 87px; }
.c2 .row > label:first-child { width: 157px; }
.c3 .row > label:first-child { width: 61px; }
.rad { display: flex; flex-direction: column; align-items: flex-start; gap: 7px; padding: 4px 0 5px 3px; }
.rad .cb { height: 24px; }
.nums { display: flex; gap: 8px; padding-left: 21px; }
.nums button { width: 20px; height: 20px; border: 1px solid #a9adb0; background: #e3e3e3; color: #9a9a9a; font-size: 13px; line-height: 16px; }
.nums .on { background: #b8922e; color: #fff; font-weight: 700; border: 1px solid #5b4510; }
.gray { color: #a0a0a0; }
.f78 { width: 78px; } .f60 { width: 60px; }
.timing { display: flex; height: 160px; margin: 13px 0 25px -1px; border: 2px solid #7b7b7b; border-width: 2px 0 0 2px; border-bottom: 1px solid #fff; }
.tl { flex: 1; min-width: 0; display: flex; flex-direction: column; border-right: 1px solid #9a9a9a; }
.waves { height: 135px; overflow: hidden; background: linear-gradient(#fff 20%, #f8fbfc 55%, #e0eaf1); }
.waves text { font-size: 14px; }
.wv { fill: none; stroke: #111; stroke-width: 1.5; }
.fr2 { stroke: #666; }
.hthumb.wt { flex: 0 0 731px; }
.tl .hbar .l { margin-left: 8px; }
.side { width: 26px; background: #f5f5f5; display: flex; flex-direction: column; align-items: center; padding-top: 6px; gap: 10px; }
.mg { width: 20px; height: 20px; color: #2384c0; }
.mg.g { color: #a9a9a9; }
.ft { display: flex; justify-content: flex-end; gap: 11px; margin-right: -19px; }
.ft .btn { width: 105px; height: 32px; }
.ft .pri { border: 2px solid #0078d7; width: 106px; }

.marks { position: absolute; inset: 0; pointer-events: none; }
.box, .num, .arrow { position: absolute; }
.box { border: 6px solid #f00; }
.b7 { left: 369px; top: 88px; width: 45px; height: 40px; }
.b7::before { content: ""; position: absolute; left: 12px; top: 8px; width: 10px; height: 10px; border: solid #fff; border-width: 0 0 3px 3px; transform: rotate(45deg); }
.b4 { left: 532px; top: 202px; width: 111px; height: 33px; }
.b5 { left: 729px; top: 199px; width: 40px; height: 37px; }
.b6 { left: 518px; top: 385px; width: 150px; height: 84px; }
.bd { left: 819px; top: 296px; width: 817px; height: 368px; }
.num { font: 100 40px/40px "Noto Sans CJK SC", sans-serif; color: #f00; width: 40px; text-align: center; }
.n4 { left: 598px; top: 161px; }
.n5 { left: 727px; top: 159px; }
.n6 { left: 623px; top: 341px; }
.n7 { left: 307px; top: 89px; }
.arrow { left: 757px; top: 240px; width: 64px; height: 102px; }
</style>
